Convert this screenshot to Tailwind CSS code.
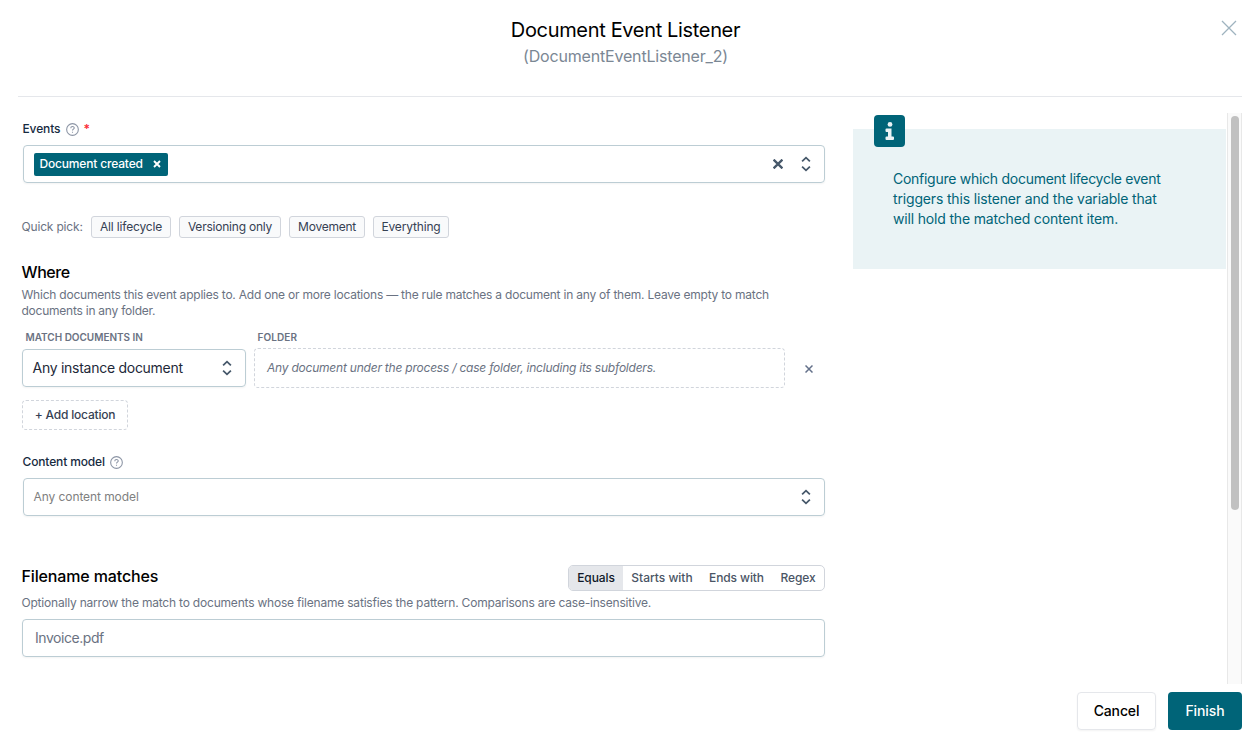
<!DOCTYPE html>
<html lang="en">

<head>
    <meta charset="UTF-8">
    <meta name="viewport" content="width=device-width, initial-scale=1.0">
    <title>Document Event Listener</title>
    <!-- Include Tailwind CSS -->
    <script src="https://cdn.jsdelivr.net/npm/@tailwindcss/browser@4"></script>
</head>

<body class="bg-white text-black font-['Inter',sans-serif] w-[1257px] h-[748px] overflow-hidden flex flex-col pl-[18px] pr-[15px]">

    <!-- Dialog header -->
    <header class="relative h-[97px] shrink-0 border-b border-gray-200 pt-4 text-center">
        <div class="pr-[9px]">
            <h1 class="text-xl leading-7"><span class="tracking-[-0.34px]">Document Event Listener</span></h1>
            <p class="text-base leading-6 text-[#7b8794]"><span class="tracking-[-0.18px]">(DocumentEventListener_2)</span></p>
        </div>
        <button class="absolute right-[5px] top-[20px]" aria-label="Close">
            <svg class="size-4" viewBox="0 0 16 16" fill="none" stroke="#9fb3bf" stroke-width="1.3"><path d="M1 1l14 14M15 1L1 15" /></svg>
        </button>
    </header>

    <!-- Dialog body -->
    <main class="mt-4 h-[571px] shrink-0 flex overflow-hidden">

        <!-- Form -->
        <div class="w-[807px] shrink-0 pl-1">
            <!-- Events -->
            <div class="flex items-center h-4 mt-2 pl-[0.5px]">
                <label class="text-xs font-medium text-[#172b3f] tracking-[-0.12px]">Events</label>
                <svg class="size-[13px] ml-1.5" viewBox="0 0 12 12" fill="none" stroke="#8c95a5"><circle cx="6" cy="6" r="5.4" /><path d="M4.4 4.800c0-2.100 3.200-2.100 3.200-.2C7.600 5.700 6 5.600 6 6.900M6 8v1" /></svg>
                <span class="ml-1 text-xs font-semibold leading-4 text-red-500">*</span>
            </div>
            <div class="ml-px mt-2 h-[38px] rounded-[4px] border border-[#bccdd4] shadow-xs flex items-center pl-2.5 pr-3">
                <span class="h-[23px] w-[134px] rounded-[2px] bg-[#006478] text-white text-xs font-medium flex items-center justify-between pl-[5.5px] pr-[7px]">
                    <span class="tracking-[-0.17px] whitespace-nowrap">Document created</span>
                    <svg class="size-2" viewBox="0 0 8 8" stroke="currentColor" stroke-width="1.9"><path d="M1 1l6 6M7 1L1 7" /></svg>
                </span>
                <svg class="size-2.5 ml-auto mr-[17px]" viewBox="0 0 10 10" stroke="#46586a" stroke-width="2.3"><path d="M.6.6l8.800 8.800M9.400.6L.6 9.400" /></svg>
                <svg class="w-3 h-4" viewBox="0 0 12 16" fill="none" stroke="#46586a" stroke-width="1.8"><path d="M2.100 5.300l3.900-3.600 3.900 3.600M2.100 10.700l3.900 3.600 3.900-3.600" /></svg>
            </div>

            <!-- Quick pick -->
            <div class="mt-[33px] flex h-[22px] items-center text-xs text-gray-700">
                <span class="-ml-[0.5px] w-[69.5px] text-gray-500"><span class="tracking-[-0.18px]">Quick pick:</span></span>
                <button class="h-[22px] w-20 mr-2 rounded-[3px] border border-gray-300 bg-gray-50"><span class="tracking-[-0.16px]">All lifecycle</span></button>
                <button class="h-[22px] w-[102px] mr-2 rounded-[3px] border border-gray-300 bg-gray-50"><span class="tracking-[-0.22px]">Versioning only</span></button>
                <button class="h-[22px] w-[76px] mr-2 rounded-[3px] border border-gray-300 bg-gray-50"><span class="tracking-[-0.25px]">Movement</span></button>
                <button class="h-[22px] w-[76px] rounded-[3px] border border-gray-300 bg-gray-50"><span class="tracking-[-0.16px]">Everything</span></button>
            </div>

            <!-- Where -->
            <h2 class="-ml-[0.5px] mt-[22px] text-base leading-6 font-medium"><span class="tracking-[-0.4px]">Where</span></h2>
            <p class="-ml-[0.5px] mt-[3px] text-xs leading-4 text-gray-500 whitespace-nowrap">
                <span class="tracking-[-0.22px]">Which documents this event applies to. Add one or more locations — the rule matches a document in any of them. Leave empty to match</span><br>
                <span class="tracking-[-0.24px]">documents in any folder.</span>
            </p>
            <div class="mt-[10px] flex pl-[3.5px] text-[10px] leading-4 font-semibold text-gray-500">
                <span class="w-[232px]"><span class="tracking-[-0.02px]">MATCH DOCUMENTS IN</span></span>
                <span class="tracking-[0.1px]">FOLDER</span>
            </div>
            <div class="mt-[3px] flex h-10 items-center">
                <div class="w-56 h-[38px] rounded-[4px] border border-[#bccdd4] shadow-xs flex items-center justify-between pl-[9.5px] pr-3 text-sm text-gray-800">
                    <span class="tracking-[-0.27px]">Any instance document</span>
                    <svg class="w-3 h-4" viewBox="0 0 12 16" fill="none" stroke="#46586a" stroke-width="1.8"><path d="M2.100 5.300l3.900-3.600 3.900 3.600M2.100 10.700l3.900 3.600 3.900-3.600" /></svg>
                </div>
                <div class="ml-2 w-[531px] h-10 rounded-[4px] border border-dashed border-gray-300 flex items-center pl-3 text-xs italic text-gray-500">
                    <span class="tracking-[-0.22px]">Any document under the process / case folder, including its subfolders.</span>
                </div>
                <svg class="size-2 ml-5 mt-px" viewBox="0 0 8 8" stroke="#64718a" stroke-width="1.5"><path d="M.5.5l7 7M7.500.5l-7 7" /></svg>
            </div>
            <button class="mt-3 block w-[106px] h-[30px] rounded-[4px] border border-dashed border-gray-300 text-xs font-medium text-gray-700"><span class="tracking-[-0.2px]">+ Add location</span></button>

            <!-- Content model -->
            <div class="flex items-center h-4 mt-6 pl-[0.5px]">
                <label class="text-xs font-medium text-[#172b3f] tracking-[-0.14px]">Content model</label>
                <svg class="size-[13px] ml-[5px]" viewBox="0 0 12 12" fill="none" stroke="#8c95a5"><circle cx="6" cy="6" r="5.400" /><path d="M4.400 4.800c0-2.100 3.200-2.100 3.200-.2C7.600 5.700 6 5.600 6 6.900M6 8v1" /></svg>
            </div>
            <div class="ml-px mt-2 h-[38px] rounded-[4px] border border-[#bccdd4] shadow-xs flex items-center justify-between pl-[9.5px] pr-3 text-xs text-[#808080]">
                <span class="tracking-[-0.08px]">Any content model</span>
                <svg class="w-3 h-4" viewBox="0 0 12 16" fill="none" stroke="#46586a" stroke-width="1.8"><path d="M2.100 5.300l3.900-3.600 3.900 3.600M2.100 10.700l3.900 3.600 3.900-3.600" /></svg>
            </div>

            <!-- Filename -->
            <div class="mt-[49px] flex h-[26px] justify-between">
                <h2 class="-ml-[0.5px] -mt-px text-base leading-6 font-medium"><span class="tracking-[-0.14px]">Filename matches</span></h2>
                <div class="flex w-[257px] h-[26px] rounded-[5px] border border-gray-300 overflow-hidden text-xs font-medium leading-6 text-gray-600 text-center whitespace-nowrap">
                    <span class="w-[54px] bg-gray-200 text-gray-900"><span class="tracking-[-0.1px]">Equals</span></span>
                    <span class="w-[78px]"><span class="tracking-[-0.02px]">Starts with</span></span>
                    <span class="w-[71px]"><span class="tracking-[-0.1px]">Ends with</span></span>
                    <span class="w-[52px]"><span class="tracking-[-0.1px]">Regex</span></span>
                </div>
            </div>
            <p class="-ml-[0.5px] mt-1 text-xs leading-4 text-gray-500 whitespace-nowrap"><span class="tracking-[-0.2px]">Optionally narrow the match to documents whose filename satisfies the pattern. Comparisons are case-insensitive.</span></p>
            <div class="mt-2 h-[38px] rounded-[4px] border border-[#bccdd4] shadow-xs flex items-center pl-3 text-sm text-gray-500"><span class="tracking-[-0.45px]">Invoice.pdf</span></div>
        </div>

        <!-- Help panel -->
        <aside class="relative ml-7 mt-4 w-[373px] h-[140px] shrink-0 bg-[#eaf3f5] pl-10 pt-10 text-sm leading-5 text-[#006478] whitespace-nowrap">
            <div class="absolute left-[21px] -top-3.5 w-[31px] h-8 rounded-[4px] bg-[#006478] flex items-center justify-center text-[#eaf3f5]">
                <svg class="w-2.5 h-[18px]" viewBox="0 0 10 18" fill="currentColor"><circle cx="5" cy="2.400" r="2.400" /><path d="M1.500 6.500h5v8H8a1 1 0 0 1 1 1V17a1 1 0 0 1-1 1H1.500a1 1 0 0 1-1-1v-1.500a1 1 0 0 1 1-1H3V10H1.500a1 1 0 0 1-1-1V7.500a1 1 0 0 1 1-1z" /></svg>
            </div>
            <p class="tracking-[-0.27px]">Configure which document lifecycle event</p>
            <p class="tracking-[-0.16px]">triggers this listener and the variable that</p>
            <p class="tracking-[-0.17px]">will hold the matched content item.</p>
        </aside>

        <!-- Scrollbar -->
        <div class="ml-px w-[15px] shrink-0 border-x border-[#e8e8e8] bg-[#fafafa] pt-[3px] pl-[3px]">
            <div class="w-2 h-[394px] rounded-full bg-[#c1c1c1]"></div>
        </div>
    </main>

    <!-- Dialog actions -->
    <footer class="mt-2 flex justify-end gap-3 text-sm font-medium">
        <button class="w-[79px] h-[38px] rounded-[4px] border border-gray-200 shadow-xs"><span class="tracking-[-0.15px]">Cancel</span></button>
        <button class="w-[74px] h-[38px] rounded-[4px] bg-[#006478] text-white"><span class="tracking-[-0.1px]">Finish</span></button>
    </footer>

</body>

</html>
